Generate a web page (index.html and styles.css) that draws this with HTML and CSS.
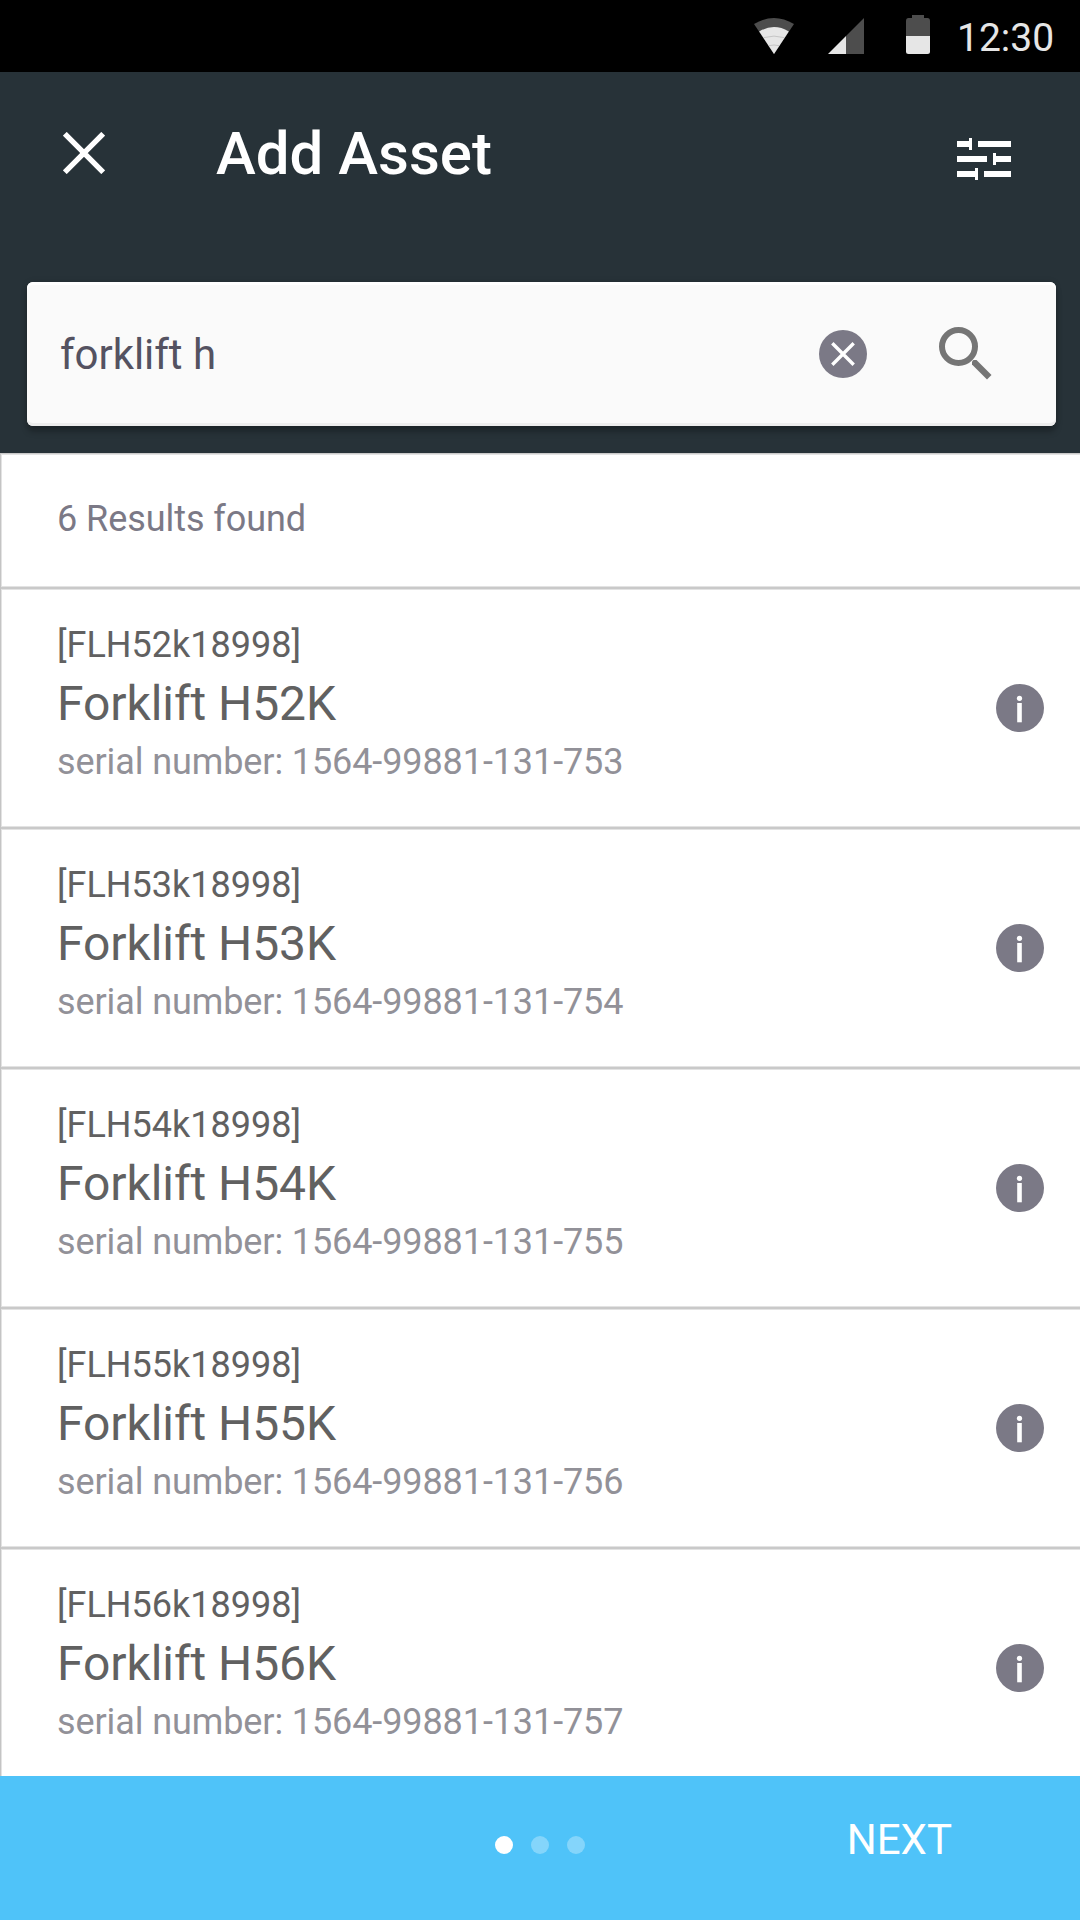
FILE: index.html
```
<!DOCTYPE html>
<html lang="en">
<head>
<meta charset="utf-8">
<title>Add Asset</title>
<link rel="stylesheet" href="styles.css">
</head>
<body>
<svg class="sprite" aria-hidden="true">
  <symbol id="info" viewBox="0 0 48 48">
    <circle cx="24" cy="24" r="24" fill="#7b7986"/>
    <circle cx="23.5" cy="14.3" r="2.6" fill="#fff"/>
    <rect x="21.2" y="19" width="4.6" height="19.3" fill="#fff"/>
  </symbol>
</svg>
<div class="screen">
  <div class="status">
    <svg class="wifi" width="40" height="36" viewBox="0 0 40 36"><path d="M0 6Q20-6 40 6L20 36Z" fill="#4d4d4d"/><path d="M5.2 13.4Q20 4.8 34.8 13.4L20 36Z" fill="#e6e6e6"/><path d="M9.8 19.6Q20 16.6 30.2 19.6M14.6 27.7Q20 26.3 25.4 27.7" fill="none" stroke="#bdbdbd" stroke-width=".8"/></svg>
    <svg class="signal" width="36" height="36" viewBox="0 0 36 36"><path d="M18 18L36 0V36H18Z" fill="#4d4d4d"/><path d="M0 36L18 18V36Z" fill="#e6e6e6"/></svg>
    <svg class="battery" width="24" height="39" viewBox="0 0 24 39"><path d="M6 0H18V3H21.5Q24 3 24 6V21H0V6Q0 3 2.5 3H6Z" fill="#4d4d4d"/><path d="M0 21H24V36.500Q24 39 21.500 39H2.500Q0 39 0 36.500Z" fill="#e6e6e6"/></svg>
    <span class="clock">12:30</span>
  </div>
  <header class="header">
    <div class="appbar">
      <svg class="close" width="42" height="42" viewBox="0 0 42 42"><path d="M1.800 1.800L40.200 40.200M40.200 1.800L1.800 40.200" stroke="#fff" stroke-width="5.400"/></svg>
      <h1 class="title">Add Asset</h1>
      <svg class="filter" width="54" height="42" viewBox="0 0 54 42"><path d="M0 3H12V0H15V12H12V9H0ZM21 3H54V9H21ZM0 18H30V24H0ZM36 15H39V18H54V24H39V27H36ZM0 33H18V30H21V42H18V39H0ZM27 33H54V39H27Z" fill="#fff"/></svg>
    </div>
    <div class="search">
      <span class="query">forklift h</span>
      <svg class="clear" width="48" height="48" viewBox="0 0 48 48"><circle cx="24" cy="24" r="24" fill="#7b7986"/><path d="M13.300 13.300L34.700 34.700M34.700 13.300L13.300 34.700" stroke="#fff" stroke-width="3.400"/></svg>
      <svg class="magnifier" width="53" height="53" viewBox="0 0 53 53"><circle cx="19.500" cy="19.500" r="16.500" fill="none" stroke="#757575" stroke-width="6"/><path d="M33 37.500V34.500L34.500 33H37.500L52.500 48L48 52.500Z" fill="#757575"/></svg>
    </div>
  </header>
  <main class="results">
    <div class="count">6 Results found</div>
    <div class="item"><div class="text"><div class="code">[FLH52k18998]</div><div class="name">Forklift H52K</div><div class="serial">serial number: 1564-99881-131-753</div></div><svg class="info"><use href="#info"/></svg></div>
    <div class="item"><div class="text"><div class="code">[FLH53k18998]</div><div class="name">Forklift H53K</div><div class="serial">serial number: 1564-99881-131-754</div></div><svg class="info"><use href="#info"/></svg></div>
    <div class="item"><div class="text"><div class="code">[FLH54k18998]</div><div class="name">Forklift H54K</div><div class="serial">serial number: 1564-99881-131-755</div></div><svg class="info"><use href="#info"/></svg></div>
    <div class="item"><div class="text"><div class="code">[FLH55k18998]</div><div class="name">Forklift H55K</div><div class="serial">serial number: 1564-99881-131-756</div></div><svg class="info"><use href="#info"/></svg></div>
    <div class="item"><div class="text"><div class="code">[FLH56k18998]</div><div class="name">Forklift H56K</div><div class="serial">serial number: 1564-99881-131-757</div></div><svg class="info"><use href="#info"/></svg></div>
  </main>
  <footer class="footer">
    <div class="dots"><i class="dot on"></i><i class="dot"></i><i class="dot"></i></div>
    <span class="next">NEXT</span>
  </footer>
</div>
</body>
</html>
```
FILE: styles.css
```
* { box-sizing: border-box; }
body { margin: 0; font-family: Roboto, sans-serif; font-variant-ligatures: none; }
svg { display: block; flex: none; }
.sprite { display: none; }
.screen { width: 1080px; height: 1920px; display: flex; flex-direction: column; background: #fff; overflow: hidden; }

.status { height: 72px; flex: none; background: #000; display: flex; align-items: flex-start; justify-content: flex-end; padding-right: 26px; }
.wifi { margin: 18px 34px 0 0; }
.signal { margin: 18px 42px 0 0; }
.battery { margin-top: 15px; }
.clock { width: 124px; padding-left: 27px; font-size: 39px; line-height: 77px; color: #e6e6e6; white-space: nowrap; }

.header { height: 381px; flex: none; background: #273238; padding: 0 24px 0 27px; }
.appbar { height: 210px; display: flex; align-items: flex-start; padding: 0 45px 0 36px; }
.close { margin-top: 60px; }
.title { margin: 47px 0 0 111px; flex: 1; font-size: 60px; line-height: 70px; font-weight: 500; color: #fff; }
.filter { margin-top: 66px; }
.search { height: 144px; display: flex; align-items: center; padding: 0 64px 0 33px; border-radius: 6px; background: #fafafa; box-shadow: 0 6px 6px rgba(0,0,0,.24), 0 0 6px rgba(0,0,0,.12), inset 0 3px 0 #fff, inset 0 -3px 0 #ededed; }
.query { flex: 1; padding-top: 2px; font-size: 42px; line-height: 50px; letter-spacing: -.04px; color: #545261; }
.clear { margin-right: 72px; }
.magnifier { margin-top: -2px; }

.results { flex: 1; min-height: 0; overflow: hidden; border-left: 1px solid #c4c4c4; border-top: 1px solid #c9c9c9; box-shadow: inset 1px 1px 0 #e3e3e3; }
.count { height: 132px; padding: 40px 0 0 56px; font-size: 36px; line-height: 50px; letter-spacing: -.06px; color: #7b7986; }
.item { height: 240px; display: flex; justify-content: space-between; padding: 32px 36px 0 56px; background: linear-gradient(#e3e3e3 1px, #c9c9c9 1px, #c9c9c9 3px, #e3e3e3 3px, #e3e3e3 4px, transparent 4px); }
.code { font-size: 36px; line-height: 55px; color: #616161; }
.name { font-size: 48px; line-height: 62px; letter-spacing: -.07px; color: #616161; }
.serial { font-size: 36px; line-height: 55px; letter-spacing: -.1px; color: #929198; }
.info { width: 48px; height: 48px; margin-top: 66px; }

.footer { height: 144px; flex: none; background: #4fc3f9; display: flex; align-items: flex-start; justify-content: space-between; padding: 0 128px 0 495px; }
.dots { display: flex; gap: 18px; margin-top: 60px; }
.dot { width: 18px; height: 18px; border-radius: 50%; background: rgba(255,255,255,.3); }
.dot.on { background: #fff; }
.next { margin-top: 39px; font-size: 42px; line-height: 50px; color: #fff; }
```
